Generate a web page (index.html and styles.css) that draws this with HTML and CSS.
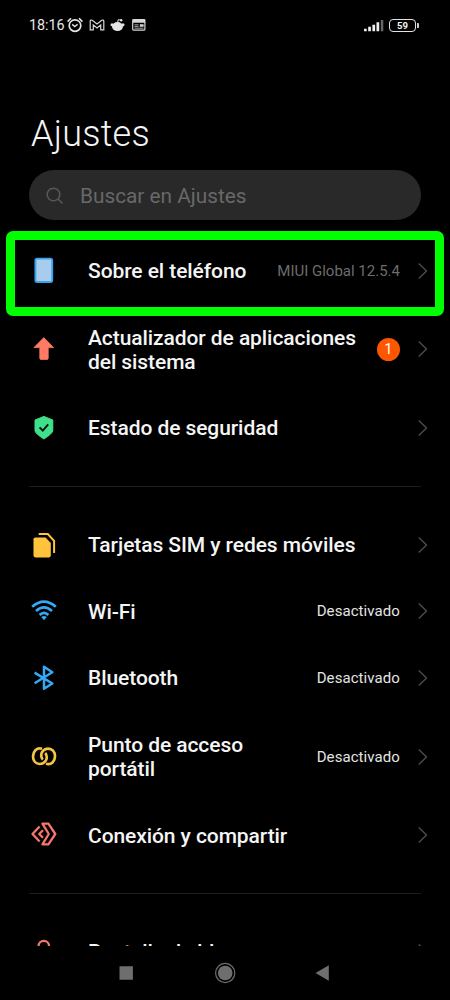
FILE: index.html
```
<!DOCTYPE html>
<html lang="es">
<head>
<meta charset="utf-8">
<title>Ajustes</title>
<link rel="stylesheet" href="styles.css">
</head>
<body>
<svg class="defs" width="0" height="0"><symbol id="chev" viewBox="0 0 10 18"><path d="M.8 1.5 8.5 9 .8 16.5" fill="none" stroke="#4b4b4b" stroke-width="1.4"/></symbol></svg>
<div class="phone">
  <header class="status">
    <span class="time">18:16</span>
    <svg class="alarm" width="18" height="16" viewBox="0 0 18 16" fill="none" stroke="#e4e4e4"><circle cx="9" cy="8.6" r="5.8" stroke-width="1.7"/><path d="M1.6 4.6 5 1.3M16.4 4.6 13 1.3" stroke-width="1.6"/><path d="M6.2 7.4 8.8 9.6 11.6 7.2" stroke-width="1.4"/></svg>
    <svg class="mail" width="16" height="14" viewBox="0 0 16 14" fill="none" stroke="#d6d6d6" stroke-width="1.2"><path d="M1.2 11.9V3.2Q1.5 1.5 3.2 2.2L8 5.9 12.8 2.2Q14.5 1.5 14.8 3.2V11.9H11.7V6.9L8 9.9 4.3 6.9V11.9Z"/></svg>
    <svg class="reddit" width="16" height="14" viewBox="0 0 16 14" fill="#e4e4e4"><ellipse cx="7.5" cy="8.6" rx="5.5" ry="4.5"/><circle cx="2" cy="6.7" r="1.5"/><circle cx="13" cy="6.7" r="1.5"/><circle cx="11.2" cy="2.2" r="1.2"/><path d="M7.5 5 8.2 1.7 11 2.2" fill="none" stroke="#e4e4e4"/></svg>
    <svg class="news" width="14" height="12" viewBox="0 0 14 12"><rect x=".7" y=".7" width="12.2" height="10.4" rx=".8" fill="none" stroke="#d8d8d8" stroke-width="1.2"/><path d="M1 1h12v2.7H1zM7.8 5.2h3.8v2.6H7.8z" fill="#d8d8d8"/><path d="M2.5 5.8h4M2.5 7.4h4M2.5 9.2h9" stroke="#a8a8a8"/></svg>
    <svg class="signal" width="20" height="13" viewBox="0 0 20 13" fill="#eee"><path d="M0 9.8h2.7v2.5H0zM4.2 7.8h2.7v4.5H4.2zM8.4 5.8h2.7v6.5H8.4zM12.5 3.3h2.7v9h-2.7z"/><path d="M16.8 1h2.5v11.3h-2.5z" fill="#666"/></svg>
    <span class="battery">59</span>
  </header>
  <h1>Ajustes</h1>
  <div class="search">
    <svg width="18" height="18" viewBox="0 0 18 18" fill="none" stroke="#575757" stroke-width="1.6"><circle cx="7.5" cy="7.5" r="6.3"/><path d="m12 12 4.5 4.5"/></svg>
    <span>Buscar en Ajustes</span>
  </div>
  <main>
    <section>
      <div class="row first">
        <div class="ico"><svg width="30" height="30" viewBox="0 0 30 30"><rect x="5.4" y="2.6" width="16.8" height="23.4" rx="1.8" fill="#a9cced" stroke="#36a3f0" stroke-width="1.9"/></svg></div>
        <div class="label">Sobre el teléfono</div><div class="value dim">MIUI Global 12.5.4</div><svg class="chev"><use href="#chev"/></svg>
      </div>
      <div class="row two">
        <div class="ico"><svg width="30" height="30" viewBox="0 0 30 30"><path d="M13.8 3.6 23.6 13.6H18.2V24.4Q18.2 25.4 17.1 25.4H10.8Q9.8 25.4 9.8 24.4V13.6H4Z" fill="#ff7b65" stroke="#ff7b65" stroke-width=".8" stroke-linejoin="round"/></svg></div>
        <div class="label">Actualizador de aplicaciones<br>del sistema</div><div class="badge">1</div><svg class="chev"><use href="#chev"/></svg>
      </div>
      <div class="row">
        <div class="ico"><svg width="30" height="30" viewBox="0 0 30 30"><path d="M13.9 3.4 22.8 7V17.5Q22.8 20.4 13.9 26 5 20.4 5 17.5V7Z" fill="#3fe08a" stroke="#3fe08a" stroke-linejoin="round"/><path d="m9.6 14.3 3.2 3.3 5.4-6.2" fill="none" stroke="#051109" stroke-width="1.9"/></svg></div>
        <div class="label">Estado de seguridad</div><svg class="chev"><use href="#chev"/></svg>
      </div>
    </section>
    <section>
      <div class="row">
        <div class="ico"><svg width="30" height="30" viewBox="0 0 30 30" fill="#ffc43c"><path d="M5.3 7.4H15.6L20.8 13V25.6Q20.8 27.4 19 27.4H5.3Q3.5 27.4 3.5 25.6V9.2Q3.5 7.4 5.3 7.4Z"/><path d="M8.7 4.1H17.8L24.1 10.8V23" fill="none" stroke="#ffc43c" stroke-width="2"/></svg></div>
        <div class="label">Tarjetas SIM y redes móviles</div><svg class="chev"><use href="#chev"/></svg>
      </div>
      <div class="row">
        <div class="ico"><svg width="30" height="30" viewBox="0 0 30 30" fill="none" stroke="#35a8f5" stroke-width="2.7"><path d="M2.2 10.8Q14 .5 25.8 10.8M6 15Q14 7.6 22 15M9.6 18.9Q14 14.7 18.4 18.9"/><path d="M11.2 21.1Q14 18.8 16.8 21.1L14 24.3Z" fill="#35a8f5" stroke="none"/></svg></div>
        <div class="label">Wi-Fi</div><div class="value">Desactivado</div><svg class="chev"><use href="#chev"/></svg>
      </div>
      <div class="row">
        <div class="ico"><svg width="30" height="30" viewBox="0 0 30 30" fill="none" stroke="#35a8f5" stroke-width="2.5" stroke-linejoin="round"><path d="M4.6 9.6 22.3 20.5 14 25.8V3.8L22.3 9.2 4.6 20.3"/></svg></div>
        <div class="label">Bluetooth</div><div class="value">Desactivado</div><svg class="chev"><use href="#chev"/></svg>
      </div>
      <div class="row two">
        <div class="ico"><svg width="30" height="30" viewBox="0 0 30 30" fill="none" stroke="#f5c443" stroke-width="2.7"><path d="M12 6.8C6.5 5.2 3 9.5 3 14.3S6 22 9.8 22 16.8 19 16.8 15.5Q16.8 12.6 15.2 11"/><path d="M16 21.8C21.5 23.4 25 19 25 14.3S22 6.6 18.2 6.6 11.2 9.6 11.2 13Q11.2 16 12.8 17.6"/></svg></div>
        <div class="label">Punto de acceso<br>portátil</div><div class="value">Desactivado</div><svg class="chev"><use href="#chev"/></svg>
      </div>
      <div class="row">
        <div class="ico"><svg width="30" height="30" viewBox="0 0 30 30" fill="none" stroke="#f6776a" stroke-width="2.3" stroke-linejoin="round"><path d="M9.6 6.5 2.5 14 9.6 21.5M13 10.3 9.2 14 13 17.7"/><path d="M12.4 3.7H18.4L25.3 14 18.4 24.3H12.4L18.8 14Z"/></svg></div>
        <div class="label">Conexión y compartir</div><svg class="chev"><use href="#chev"/></svg>
      </div>
    </section>
    <section class="last">
      <div class="row">
        <div class="ico"><svg width="30" height="30" viewBox="0 0 30 30" fill="none" stroke="#f6776a" stroke-width="2.2"><path d="M8.6 12V9a5.2 5.2 0 0 1 10.4 0V12"/><rect x="5" y="12" width="18" height="14" rx="2" fill="#f6776a"/></svg></div>
        <div class="label">Pantalla de bloqueo</div><svg class="chev"><use href="#chev"/></svg>
      </div>
    </section>
  </main>
  <nav>
    <svg width="450" height="54" viewBox="0 0 450 54" fill="#6e6e6e"><path d="M119.5 20.3h13.4v13.4h-13.4zM315.5 27 328.8 19.3V34.7Z"/><circle cx="225.2" cy="27" r="7.3"/><circle cx="225.2" cy="27" r="9.6" fill="none" stroke="#6e6e6e" stroke-width="1.2"/></svg>
  </nav>
  <div class="highlight"></div>
</div>
</body>
</html>
```

FILE: styles.css
```
* { box-sizing: border-box; }
body { margin: 0; background: #000; }
.defs { position: absolute; }
.phone { position: relative; display: flex; flex-direction: column; width: 450px; height: 1000px; overflow: hidden; background: #000; color: #f5f5f5; font-family: Roboto, "Liberation Sans", sans-serif; }
.phone svg { display: block; flex: none; }
.status { display: flex; align-items: center; height: 50px; padding: 0 34px 0 29px; }
.time { width: 37px; font-size: 14.3px; line-height: 16px; color: #e8e8e8; white-space: nowrap; }
.mail { margin-left: 5px; }
.reddit { margin-left: 5px; }
.news { margin-left: 6px; }
.signal { margin-left: auto; }
.battery { position: relative; width: 27px; height: 13px; margin-left: 5px; border: 1.8px solid #e2e2e2; border-radius: 4px; font-size: 9.5px; line-height: 11px; font-weight: 700; text-align: center; }
.battery::after { content: ""; position: absolute; right: -4px; top: 3px; width: 2px; height: 5px; background: #ccc; border-radius: 0 1px 1px 0; }
h1 { margin: 62px 0 0 31px; height: 44px; font-size: 36px; line-height: 44px; font-weight: 300; letter-spacing: .25px; }
.search { display: flex; align-items: center; width: 392px; height: 50px; margin: 14px 0 0 29px; padding: 1px 0 0 17px; gap: 16px; border-radius: 25px; background: #292929; color: #686868; font-size: 20.8px; line-height: 24px; }
main { flex: none; height: 726px; padding-top: 17.5px; overflow: hidden; }
section + section { margin-top: 25px; padding-top: 25.6px; position: relative; }
section + section::before { content: ""; position: absolute; left: 29px; right: 29px; top: 0; height: 1px; background: #1d1d1d; }
.row { display: flex; align-items: center; height: 66.5px; padding: 0 22px 0 30px; }
.row.two { height: 90.5px; }
section + section .row.two { height: 91px; }
section.last { margin-top: 24.4px; padding-top: 25.5px; }
.ico { width: 30px; margin-right: 28px; }
.label { flex: 1; font-size: 21px; line-height: 24px; font-weight: 500; letter-spacing: -.08px; padding-top: 1px; white-space: nowrap; }
.value { font-size: 15px; line-height: 20px; letter-spacing: .08px; color: #e4e4e4; white-space: nowrap; }
.value.dim { color: #6c6c6c; letter-spacing: 0; }
.badge { width: 23px; height: 23px; border-radius: 50%; background: #ff5600; color: #fff; font-size: 14px; line-height: 23px; text-align: center; }
.chev { width: 10px; height: 18px; margin-left: 18px; }
nav { flex: none; height: 54px; background: #000; }
.highlight { position: absolute; left: 6px; top: 231px; width: 438px; height: 85px; border: 9px solid #00ff01; border-radius: 7px; }
```
